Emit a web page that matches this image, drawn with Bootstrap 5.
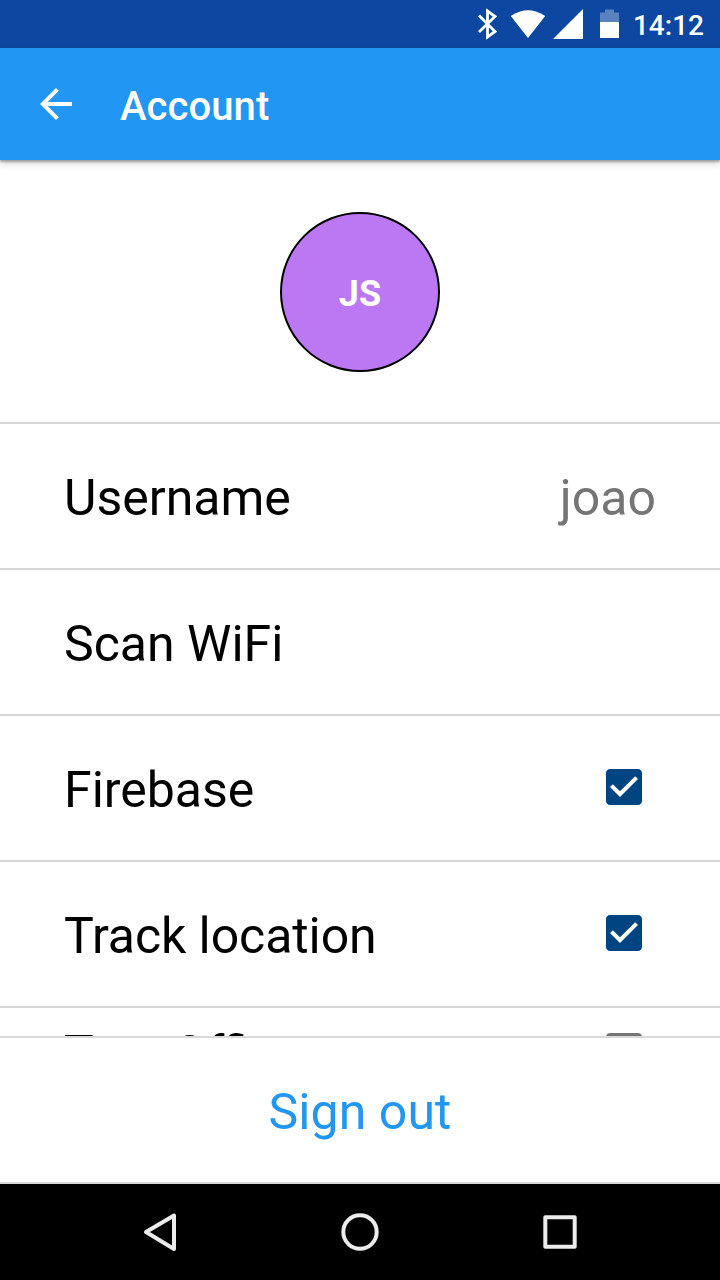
<!DOCTYPE html>
<html lang="en">
<head>
<meta charset="utf-8">
<meta name="viewport" content="width=device-width, initial-scale=1">
<title>Account</title>
<link href="https://cdn.jsdelivr.net/npm/bootstrap@5.3.0/dist/css/bootstrap.min.css" rel="stylesheet">
<style>
  body { font-family: Roboto, sans-serif; color: #000; background: #fff; }
  svg { display: block; flex: none; }
  .status-bar { height: 48px; background: #0d47a1; padding-right: 16px; font-size: 28px; font-weight: 500; line-height: 1; }
  .status-icons { margin-right: 13px; }
  .clock { padding-top: 4px; }
  .app-bar { height: 112px; background: #2196f3; padding-left: 32px; box-shadow: 0 2px 2px rgba(0,0,0,.28), 0 3px 8px rgba(0,0,0,.2); z-index: 1; }
  .app-title { font-size: 40px; font-weight: 500; line-height: 1; letter-spacing: .08px; margin: 0 0 0 40px; padding-top: 6px; }
  .profile { height: 264px; border-bottom: 2px solid #d6d6d6; padding-top: 2px; }
  .avatar { width: 160px; height: 160px; background: #bb78f2; border: 2px solid #000; font-size: 36px; font-weight: 700; padding-top: 3px; }
  .setting { height: 146px; border-bottom: 2px solid #d6d6d6; padding: 0 64px; font-size: 50px; line-height: 1; }
  .setting-compact { height: 90px; }
  .setting-label { padding-top: 4px; }
  .label-tight { letter-spacing: -.08px; }
  .setting svg { margin: -3px 8px 0 0; }
  .muted-value { color: #757575; }
  .sign-out { height: 148px; border-top: 2px solid #d9d9d9; border-bottom: 2px solid #d9d9d9; font-size: 50px; line-height: 1; letter-spacing: .08px; color: #2196f3; background: #fff; padding-top: 4px; }
  .nav-keys { height: 96px; background: #000; }
</style>
</head>
<body>
<div class="d-flex flex-column vh-100 overflow-hidden">
  <div class="status-bar d-flex align-items-center justify-content-end flex-shrink-0 text-white">
    <svg width="142" height="48" viewBox="478 0 142 48" class="status-icons" fill="#fff">
      <path d="M479 15.500L495 31.500L487.500 37V11L495 16.500L479 32" fill="none" stroke="#fff" stroke-width="2.800"/>
      <path d="M510.800 16Q528 4.500 545.200 16L528 38z"/>
      <path d="M583 9v30h-30z"/>
      <path d="M605 9.500h9v3h5V22h-19v-9.500h5z" opacity=".32"/>
      <path d="M600 22h19v16h-19z"/>
    </svg>
    <span class="clock">14:12</span>
  </div>
  <header class="app-bar d-flex align-items-center flex-shrink-0 position-relative text-white">
    <svg width="48" height="48" viewBox="0 0 24 24" fill="#fff"><path d="M20 11H7.830l5.590-5.590L12 4l-8 8 8 8 1.410-1.410L7.830 13H20z"/></svg>
    <h1 class="app-title">Account</h1>
  </header>
  <main class="flex-grow-1 overflow-hidden" style="min-height:0">
    <div class="profile d-flex align-items-center justify-content-center">
      <div class="avatar rounded-circle d-flex align-items-center justify-content-center text-white">JS</div>
    </div>
    <div class="setting d-flex align-items-center justify-content-between"><span class="setting-label">Username</span><span class="setting-label muted-value">joao</span></div>
    <div class="setting d-flex align-items-center"><span class="setting-label">Scan WiFi</span></div>
    <div class="setting d-flex align-items-center justify-content-between"><span class="setting-label">Firebase</span>
      <svg width="48" height="48" viewBox="0 0 24 24" fill="#004581"><path d="M19 3H5c-1.110 0-2 .9-2 2v14c0 1.100.890 2 2 2h14c1.110 0 2-.9 2-2V5c0-1.100-.890-2-2-2zm-9 14l-5-5 1.410-1.410L10 14.170l7.590-7.590L19 8l-9 9z"/></svg></div>
    <div class="setting d-flex align-items-center justify-content-between"><span class="setting-label label-tight">Track location</span>
      <svg width="48" height="48" viewBox="0 0 24 24" fill="#004581"><path d="M19 3H5c-1.110 0-2 .9-2 2v14c0 1.100.890 2 2 2h14c1.110 0 2-.9 2-2V5c0-1.100-.890-2-2-2zm-9 14l-5-5 1.410-1.410L10 14.170l7.590-7.590L19 8l-9 9z"/></svg></div>
    <div class="setting setting-compact d-flex align-items-center justify-content-between"><span class="setting-label">Test Office</span>
      <svg width="48" height="48" viewBox="0 0 24 24" fill="#757575"><path d="M19 5v14H5V5h14m0-2H5c-1.100 0-2 .9-2 2v14c0 1.100.9 2 2 2h14c1.100 0 2-.9 2-2V5c0-1.100-.9-2-2-2z"/></svg></div>
  </main>
  <div class="sign-out d-flex align-items-center justify-content-center flex-shrink-0">Sign out</div>
  <nav class="nav-keys flex-shrink-0 d-flex justify-content-center">
    <svg width="720" height="96" viewBox="0 1184 720 96" fill="none" stroke="#ececec" stroke-width="4" stroke-linejoin="round">
      <path d="M146 1232L174 1215.500V1249z"/>
      <circle cx="360" cy="1232" r="16.700"/>
      <rect x="545.300" y="1217.300" width="29.400" height="29.400"/>
    </svg>
  </nav>
</div>
<script src="https://cdn.jsdelivr.net/npm/bootstrap@5.3.0/dist/js/bootstrap.bundle.min.js"></script>
</body>
</html>
